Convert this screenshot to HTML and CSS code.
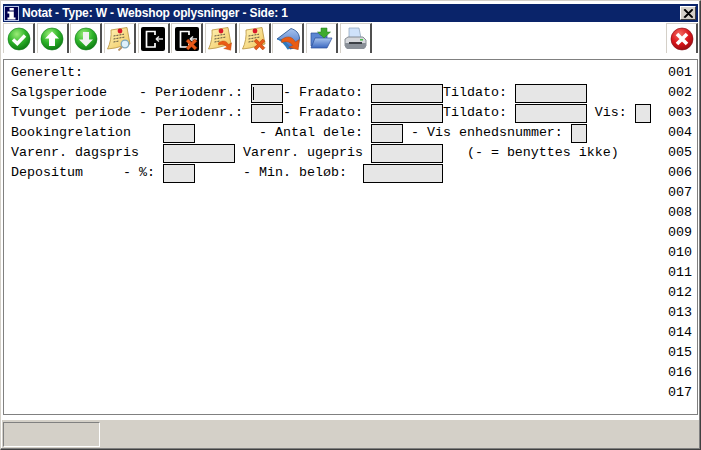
FILE: index.html
```html
<!DOCTYPE html>
<html lang="da">
<head>
<meta charset="utf-8">
<title>Notat</title>
<link rel="stylesheet" href="styles.css">
</head>
<body>
<svg class="defs" width="0" height="0" aria-hidden="true">
  <defs>
    <radialGradient id="green" cx="40%" cy="28%" r="80%">
      <stop offset="0" stop-color="#9cec78"/><stop offset=".5" stop-color="#2fb52a"/><stop offset="1" stop-color="#08700f"/>
    </radialGradient>
    <radialGradient id="red" cx="40%" cy="28%" r="80%">
      <stop offset="0" stop-color="#f56a62"/><stop offset=".55" stop-color="#d8141a"/><stop offset="1" stop-color="#8e0a10"/>
    </radialGradient>
    <linearGradient id="paper" x1="0" y1="0" x2="1" y2="1">
      <stop offset="0" stop-color="#fff4b8"/><stop offset="1" stop-color="#f0c65e"/>
    </linearGradient>
    <linearGradient id="blue" x1="0" y1="0" x2="0" y2="1">
      <stop offset="0" stop-color="#a8c4ee"/><stop offset="1" stop-color="#3b68c0"/>
    </linearGradient>
    <symbol id="note" viewBox="0 0 24 24">
      <path d="M4 3 L20 0.5 L23 17 L8 21 L0.5 22 C3.5 16 4.5 9 4 3Z" fill="url(#paper)" stroke="#b8923c" stroke-width=".8"/>
      <circle cx="13" cy="4" r="2.4" fill="#d8182a"/>
      <path d="M6.5 9 L17 7.2 M6.5 12 L18 10 M6.5 15 L12 14" stroke="#5e5540" stroke-width="1" stroke-dasharray="2 1"/>
    </symbol>
    <symbol id="door" viewBox="0 0 24 24">
      <rect width="24" height="24" rx="2" fill="#000"/>
      <path d="M14 8 V4.5 H5.5 V20 H14 V16" fill="none" stroke="#fff" stroke-width="1.7"/>
      <path d="M15 12 H22 M15 12 L18 9.5 M15 12 L18 14.5" fill="none" stroke="#e0e0e0" stroke-width="1.5"/>
    </symbol>
    <symbol id="orangex" viewBox="0 0 12 12">
      <path d="M1 3 L3 1 L6 4 L9 1 L11 3 L8 6 L11 9 L9 11 L6 8 L3 11 L1 9 L4 6Z" fill="#e8591a" stroke="#a83c08" stroke-width=".5"/>
    </symbol>
    <symbol id="orangearrow" viewBox="0 0 16 12">
      <path d="M0.5 3.5 C6 -0.5 10 1.5 12 5.5 L15.5 3.5 L14.5 12 L6.5 10 L10 8.5 C8 5.5 5 4.5 0.5 6Z" fill="#ea5c14" stroke="#b04408" stroke-width=".4"/>
    </symbol>
  </defs>
</svg>

<div class="window">
  <header class="titlebar">
    <svg class="title-icon" viewBox="0 0 15 15" width="15" height="15">
      <rect x=".5" y=".5" width="14" height="14" fill="#000050" stroke="#b8c4e4"/>
      <path d="M5.5 4.5 V2 H9.8 V4.5Z M3.5 5.5 H9.8 V11.5 H11.5 V13.5 H3.5 V11.5 H5.3 V7.5 H3.5Z" fill="#fff"/>
    </svg>
    <span class="title-text">Notat - Type: W - Webshop oplysninger - Side: 1</span>
    <button class="title-close" type="button" aria-label="Luk">
      <svg viewBox="0 0 10 9" width="10" height="9"><path d="M1 0.5 L9 8.5 M2 0.5 L10 8.5 M9 0.5 L1 8.5 M10 0.5 L2 8.5" stroke="#000" stroke-width="1.2"/></svg>
    </button>
  </header>

  <nav class="toolbar">
    <div class="tool"><svg viewBox="0 0 24 24" width="24" height="24"><circle cx="12" cy="12" r="11" fill="url(#green)" stroke="#0f7a18" stroke-width=".6"/><path d="M6 12.5 L10.3 16.5 L18 8.5" fill="none" stroke="#fff" stroke-width="3.4"/></svg></div>
    <div class="tool"><svg viewBox="0 0 24 24" width="24" height="24"><circle cx="12" cy="12" r="11" fill="url(#green)" stroke="#0f7a18" stroke-width=".6"/><path d="M12 4.5 L19 11.5 H15 V19 H9 V11.5 H5Z" fill="#fff"/></svg></div>
    <div class="tool"><svg viewBox="0 0 24 24" width="24" height="24"><circle cx="12" cy="12" r="11" fill="url(#green)" stroke="#0f7a18" stroke-width=".6"/><path d="M12 19.5 L19 12.5 H15 V5 H9 V12.5 H5Z" fill="#f2f2f2"/></svg></div>
    <div class="tool"><svg viewBox="0 0 24 24" width="24" height="24"><use href="#note"/><circle cx="18" cy="17" r="3.8" fill="#dff1fb" stroke="#7da7bd" stroke-width="1.3"/><path d="M15 20 L11.5 23.5" stroke="#b89060" stroke-width="1.8"/></svg></div>
    <div class="tool"><svg viewBox="0 0 24 24" width="24" height="24"><use href="#door"/></svg></div>
    <div class="tool"><svg viewBox="0 0 24 24" width="24" height="24"><use href="#door"/><use href="#orangex" x="10" y="11" width="13" height="13"/></svg></div>
    <div class="tool"><svg viewBox="0 0 24 24" width="24" height="24"><use href="#note"/><use href="#orangearrow" x="10" y="12" width="14" height="12"/></svg></div>
    <div class="tool"><svg viewBox="0 0 24 24" width="24" height="24"><use href="#note"/><use href="#orangex" x="11" y="11" width="13" height="13"/></svg></div>
    <div class="tool"><svg viewBox="0 0 24 24" width="24" height="24"><path d="M1 12 L15 1.5 C20 3 23 6 23.5 11 L22 20 L14 22 C12 17 8 13 1 12Z" fill="url(#blue)" stroke="#1d4b8a" stroke-width=".8"/><path d="M1 12 C7 11 11 14 14 22 L11.5 22.5 C9 18 6 15 1 12Z" fill="#2f7dc0"/><use href="#orangearrow" x="5" y="8" width="19" height="15"/></svg></div>
    <div class="tool"><svg viewBox="0 0 24 24" width="24" height="24"><path d="M2 6 H9 L11 8 H18 V19 H2Z" fill="#5b86d2" stroke="#2c4f98" stroke-width=".7"/><path d="M2 21 L6 11 H23 L18 21Z" fill="url(#blue)" stroke="#2c4f98" stroke-width=".7"/><path d="M12 1 H18 V5 H21.5 L15 11 L8.5 5 H12Z" fill="#3eaa2e" stroke="#237a18" stroke-width=".5"/></svg></div>
    <div class="tool"><svg viewBox="0 0 24 24" width="24" height="24"><path d="M6 1 H16 L18 11 H6Z" fill="#cfe2fa" stroke="#8aa0b8" stroke-width=".7"/><path d="M2 12 L5 10 H20 L23 13 V19 H2Z" fill="#d6d8dc" stroke="#70767e" stroke-width=".8"/><path d="M2 16 H23 V20 L21 22 H4 L2 20Z" fill="#8a9098"/><rect x="6" y="15" width="13" height="2" fill="#3c4046"/><rect x="17" y="12" width="3" height="1.6" fill="#4cc04c"/></svg></div>
    <div class="tool tool-end"><svg viewBox="0 0 24 24" width="24" height="24"><circle cx="12" cy="12" r="11" fill="url(#red)" stroke="#800810" stroke-width=".6"/><path d="M7 7 L17 17 M17 7 L7 17" stroke="#fff" stroke-width="3.6"/></svg></div>
  </nav>

  <main class="content">
    <div class="form">
      <div class="row">Generelt:</div>
      <div class="row">Salgsperiode    - Periodenr.: <span class="field w4"><i class="caret"></i></span>- Fradato: <span class="field w9"></span>Tildato: <span class="field w9"></span></div>
      <div class="row">Tvunget periode - Periodenr.: <span class="field w4"></span>- Fradato: <span class="field w9"></span>Tildato: <span class="field w9"></span> Vis: <span class="field w2"></span></div>
      <div class="row">Bookingrelation    <span class="field w4"></span>        - Antal dele: <span class="field w4"></span> - Vis enhedsnummer: <span class="field w2"></span></div>
      <div class="row">Varenr. dagspris   <span class="field w9"></span> Varenr. ugepris <span class="field w9"></span>   (- = benyttes ikke)</div>
      <div class="row">Depositum     - %: <span class="field w4"></span>      - Min. beløb:  <span class="field w10"></span></div>
    </div>
    <ol class="numbers">
      <li>001</li><li>002</li><li>003</li><li>004</li><li>005</li><li>006</li><li>007</li><li>008</li><li>009</li>
      <li>010</li><li>011</li><li>012</li><li>013</li><li>014</li><li>015</li><li>016</li><li>017</li>
    </ol>
  </main>

  <footer class="statusbar"><div class="status-panel"></div></footer>
</div>
</body>
</html>
```
FILE: styles.css
```css
* { box-sizing: border-box; }
html, body { margin: 0; padding: 0; }
body { width: 701px; height: 450px; overflow: hidden; background: #fff; }
.defs { position: absolute; }

.window {
  width: 701px;
  height: 450px;
  display: flex;
  flex-direction: column;
  background: #fff;
  border-top: 1px solid #d4d0c8;
  border-left: 1px solid #d4d0c8;
  border-right: 1px solid #404040;
  border-bottom: 1px solid #404040;
  padding: 1px;
  box-shadow: inset -1px -1px 0 #808080;
}

.titlebar {
  flex: none;
  height: 18px;
  margin: 2px 1px 0 1px;
  display: flex;
  align-items: center;
  padding: 0 2px 0 1px;
  background: #0a246a;
  color: #fff;
}
.title-icon { flex: none; margin-right: 3px; }
.title-text {
  font: bold 12px "Liberation Sans", sans-serif;
  letter-spacing: -0.15px;
  white-space: nowrap;
}
.title-close {
  margin-left: auto;
  width: 16px;
  height: 14px;
  padding: 0;
  display: flex;
  align-items: center;
  justify-content: center;
  background: #d4d0c8;
  border: 1px solid;
  border-color: #fff #404040 #404040 #fff;
}

.toolbar {
  flex: none;
  height: 31px;
  margin-top: 1px;
  padding: 0 1px;
  display: flex;
  gap: 1.67px;
}
.tool {
  flex: none;
  width: 32px;
  height: 30px;
  display: flex;
  align-items: center;
  justify-content: center;
  border-top: 1px solid #d4d0c8;
  border-left: 1px solid #d4d0c8;
  border-right: 2px solid #505050;
}
.tool-end { margin-left: auto; }

.content {
  flex: none;
  height: 356px;
  margin: 5px 0 0 1px;
  width: 695px;
  display: flex;
  justify-content: space-between;
  padding: 3px 5px 0 7px;
  border: 1px solid #808080;
  font: 13.333px/20px "Liberation Mono", monospace;
  color: #000;
}
.form { flex: none; }
.row {
  display: flex;
  align-items: flex-end;
  height: 20px;
  white-space: pre;
}
.field {
  display: block;
  flex: none;
  height: 19px;
  background: #e6e6e6;
  border: 1px solid #000;
  position: relative;
}
.w2 { width: 2ch; }
.w4 { width: 4ch; }
.w9 { width: 9ch; }
.w10 { width: 10ch; }
.caret {
  position: absolute;
  left: 1px;
  top: 2px;
  width: 1px;
  height: 13px;
  background: #000;
}
.numbers {
  list-style: none;
  margin: 0;
  padding: 0;
  flex: none;
}
.numbers li { height: 20px; }

.statusbar {
  flex: 1;
  margin: 5px 0 0 0;
  padding: 2px 0 0 1px;
  background: #d4d0c8;
}
.status-panel {
  width: 97px;
  height: 25px;
  background: #d4d0c8;
  border: 1px solid;
  border-color: #808080 #fff #fff #808080;
}
```
